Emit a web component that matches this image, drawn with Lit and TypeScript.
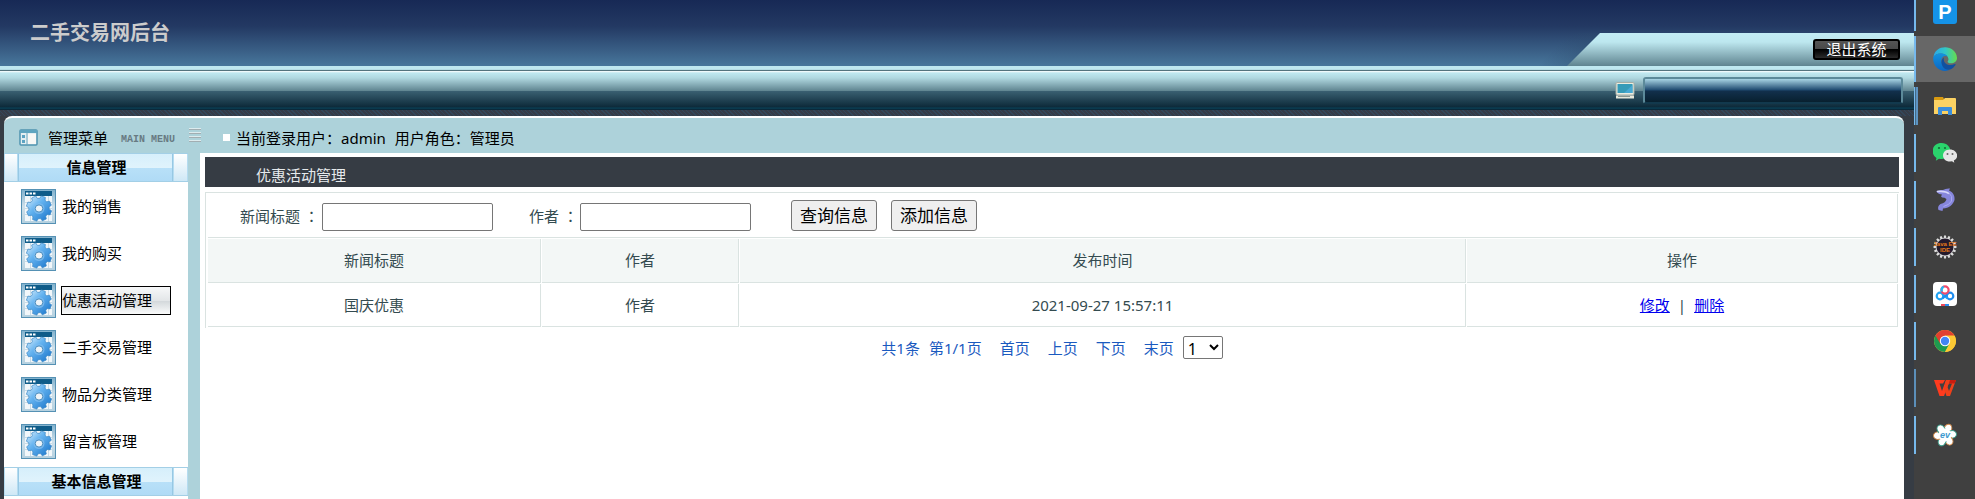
import { LitElement, html, css, svg } from "lit";
import { customElement, property } from "lit/decorators.js";
import { classMap } from "lit/directives/class-map.js";

function gearPath(cx: number, cy: number, outer: number, inner: number, teeth: number, turn = 0): string {
  const step = (Math.PI * 2) / teeth;
  const at = (r: number, a: number) => `${(cx + r * Math.cos(a)).toFixed(2)} ${(cy + r * Math.sin(a)).toFixed(2)}`;
  const points: string[] = [];
  for (let i = 0; i < teeth; i++) {
    const a = turn + i * step;
    points.push(at(inner, a - step * 0.36), at(outer, a - step * 0.22), at(outer, a + step * 0.22), at(inner, a + step * 0.36));
  }
  return `M${points.join("L")}Z`;
}

const settingsIcon = html`
  <svg class="icon" width="35" height="35" viewBox="0 0 35 35" aria-hidden="true">
    <defs>
      <linearGradient id="frame" x1="0" y1="0" x2="0" y2="1">
        <stop offset="0" stop-color="#7fb0cc" /><stop offset=".5" stop-color="#cfe0ea" /><stop offset="1" stop-color="#b4d0df" />
      </linearGradient>
      <linearGradient id="gear" x1="0" y1="0" x2="1" y2="1">
        <stop offset="0" stop-color="#e0f1fc" /><stop offset=".4" stop-color="#66b4f0" /><stop offset="1" stop-color="#1470c8" />
      </linearGradient>
    </defs>
    <rect x=".5" y=".5" width="34" height="34" fill="url(#frame)" stroke="#5591b4" />
    <rect x="4" y="7" width="27" height="25" fill="#f2f7fa" />
    <path d="M4 13.5H31M4 19.5H31M4 25.5H31M9.500 7V32M15.500 7V32M21.500 7V32M27.500 7V32" stroke="#c9dbe6" />
    <rect x="4" y="2" width="27" height="5" fill="#0f5c89" />
    <path d="M5 3.500h2.500v2H5zM8.500 3.500h2.500v2h-2.500zM12 3.500h2.500v2h-2.500z" fill="#fff" />
    <path d=${gearPath(18, 19.5, 12.8, 10.2, 8, 0.35)} fill="url(#gear)" stroke="#3a86c4" stroke-width=".7" stroke-linejoin="round" />
    <circle cx="18" cy="19.500" r="5.500" fill="#7dbcf0" opacity=".8" />
    <ellipse cx="18" cy="19.500" rx="3.800" ry="3.600" fill="#eef4f8" stroke="#4b8dbd" />
  </svg>
`;

@customElement("side-menu")
export class SideMenu extends LitElement {
  @property() current = "";
  private groups = [
    { title: "信息管理", items: ["我的销售", "我的购买", "优惠活动管理", "二手交易管理", "物品分类管理", "留言板管理"] },
    { title: "基本信息管理", items: [] as string[] },
  ];
  static styles = css`
    :host { display: block; background: #fff; color: #000; font-size: 15px; }
    .group { display: grid; grid-template-columns: 14px 1fr 15px; height: 29px; margin: 0; font-size: 15px; font-weight: 700; line-height: 26px; text-align: center; box-sizing: border-box; border: solid #a3cfe6; border-width: 1px 0; }
    .tab { border: solid #b5dcf0; border-width: 0 1px; background: linear-gradient(#fff, #cfe8f6); }
    .name { padding-left: 2px; border: solid #97c8e4; border-width: 0 1px; background: linear-gradient(#d6effb, #e0f3fc 14px, #b8e0f8 14px, #b0dbf6); }
    ul { list-style: none; margin: 0; padding: 1px 0 2px 17px; }
    li { display: flex; align-items: center; gap: 5px; height: 47px; }
    .icon { display: block; flex: none; }
    a { box-sizing: border-box; width: 110px; height: 29px; border: 1px solid transparent; line-height: 27px; color: #000; text-decoration: none; white-space: nowrap; }
    a.on { border-color: #000; background: linear-gradient(#f7f8f9, #e3e6e8 50%, #d3d8db 52%, #fafbfb); }
  `;
  render() {
    return html`<nav>${this.groups.map((g) => html`
      <h2 class="group"><span class="tab"></span><span class="name">${g.title}</span><span class="tab"></span></h2>
      ${g.items.length ? html`<ul>${g.items.map((t) => html`
        <li>${settingsIcon}<a href="#" class=${classMap({ on: t === this.current })}>${t}</a></li>`)}</ul>` : ""}
    `)}</nav>`;
  }
}

interface TaskApp { name: string; state?: string; art: unknown; }

const petal = (a: number) => svg`<ellipse cx="12" cy="5.500" rx="3.800" ry="5" fill="#fff" stroke=${a % 120 ? "#3aa08c" : "#d08a4a"} stroke-width="1" transform=${`rotate(${a + 25} 12 12)`} />`;

@customElement("task-bar")
export class TaskBar extends LitElement {
  private apps: TaskApp[] = [
    { name: "P", state: "first", art: svg`<rect y="-3" width="24" height="27" rx="3" fill="#1593e8"/><text x="12" y="19" font-size="20" font-weight="700" text-anchor="middle" fill="#fff" font-family="Liberation Sans, sans-serif">P</text>` },
    { name: "Edge", state: "active", art: svg`
      <defs><linearGradient id="e1" x1="0" x2="1"><stop offset="0" stop-color="#2aa8e8"/><stop offset=".5" stop-color="#32c6c8"/><stop offset="1" stop-color="#66dd4c"/></linearGradient>
      <linearGradient id="e2" x1="0" y1="0" x2="0" y2="1"><stop offset="0" stop-color="#1494df"/><stop offset="1" stop-color="#0a66c4"/></linearGradient></defs>
      <path d="M.5 10C2-3 23-3 24 11c0 5-6 6.500-9 4.500-1-1 .5-1.500.5-3.500C15 6 4 4 .5 10z" fill="url(#e1)"/>
      <path d="M.3 10C4 4 13 6 14.500 9.500 11 7.500 7.500 11 8.500 15c1.200 5 5 8 9 7.600C9 27-1 20 .3 10z" fill="url(#e2)"/>
      <path d="M11 10.500c-1.500 6 5 9.500 11 6.500 1 0 .5 1-.2 1.700C18 25 9.500 23.500 8.500 16c-.2-3 1-4.800 2.500-5.500z" fill="#1150a0"/>` },
    { name: "文件资源管理器", state: "stacked", art: svg`<path d="M1 4q0-1 1-1h8l1 2v3H1z" fill="#d99a10"/><path d="M1 6h9l2-2h10q1 0 1 1v15H1z" fill="#fbd263"/><path d="M5 21v-7q0-1 1-1h12q1 0 1 1v7h-4v-4H9v4z" fill="#3b8edb"/>` },
    { name: "微信", art: svg`<path d="M8.500 2C-2 2-2.500 14 3.500 17l-.7 2.700L6 17.800C22 20 20 2 8.500 2z" fill="#2ad36c"/><circle cx="6" cy="7" r="1.100" fill="#146c38"/><circle cx="12" cy="7" r="1.100" fill="#146c38"/><path d="M17 8.500c-9.500 0-9 12 0 12l2-.2 2.300 1.400-.5-2.200C27 16.500 24 8.500 17 8.500z" fill="#e6e6e6"/><circle cx="14.500" cy="13" r="1" fill="#666"/><circle cx="19.500" cy="13" r="1" fill="#666"/>` },
    { name: "Navicat", art: svg`<path d="M3 3.500Q6 1.500 10 2q2.500-1.800 7-1.500L16 2.500c4 1.500 6 5 5.500 9.500C20 17 16 20 10 20.500L9.500 23l-4-1q-1.500-3.500 2-6C11 15.500 13 13.500 13.500 11L11 9.500q-2 .5-3-1L9 6.500Q5 6 3 3.500z" fill="#8686dc"/><path d="M4 3.500q9-.8 12 2.200" fill="none" stroke="#d7d7fa" stroke-width="1.600"/><path d="M16 5q4 3 2.500 8-2 4-8 5.500" fill="none" stroke="#aaaaf2"/>` },
    { name: "Java EE IDE", art: svg`<path d=${gearPath(12, 12, 11.5, 9, 16)} fill="#ddd"/><circle cx="12" cy="12" r="8.500" fill="#241b2c"/><text x="12" y="11" font-size="6" font-weight="700" text-anchor="middle" fill="#e87a1a" font-family="Liberation Sans, sans-serif">Java EE</text><text x="12" y="17" font-size="6" font-weight="700" text-anchor="middle" fill="#e87a1a" font-family="Liberation Sans, sans-serif">IDE</text>` },
    { name: "百度网盘", art: svg`<rect width="24" height="24" rx="4" fill="#fff"/><g fill="none" stroke-width="2.200"><circle cx="7" cy="14" r="3.300" stroke="#22a4f4"/><circle cx="17" cy="14" r="3.300" stroke="#1f8df0"/><path d="M9 11.500 14.500 16.500" stroke="#22a4f4"/><path d="M15 11.500 9.500 16.500" stroke="#1f8df0"/><circle cx="12" cy="8" r="3.600" stroke="#f04a6c"/><path d="M8.700 9.500q-.8-3.500 2-4.700" stroke="#22b8f4"/></g><path d="M8 22h4v2H8z" fill="#f04a5c"/><path d="M12 22h4v2h-4z" fill="#2a8df0"/>` },
    { name: "Chrome", art: svg`<circle cx="12" cy="12" r="11" fill="#fcc934"/><path d="M12 12 2.500 6.500A11 11 0 0 0 12 23l4.800-8.300z" fill="#1e9a50"/><path d="M2.500 6.500A11 11 0 0 1 21.500 6.500H12L7.300 14.700z" fill="#e0402f"/><path d="M12 7h9.700A11 11 0 0 1 12 23l4.500-8.500z" fill="#fcc934"/><circle cx="12" cy="12" r="5.200" fill="#fff"/><circle cx="12" cy="12" r="4.200" fill="#4285f4"/>` },
    { name: "WPS", state: "dim", art: svg`<path d="M1 4h11l-2 3.500H6.500L9 15l4-11h4l-6 16H6.500z" fill="#ff3b1e"/><path d="M13 4h4l-2.500 7 1.500 4 3-7.500h-3L17 4h6l-6 16h-3.500L11 13z" fill="#f0401a"/><path d="M17 4h6l-1.300 3.500H16z" fill="#c81c10"/>` },
    { name: "EV", art: svg`${[0, 60, 120, 180, 240, 300].map(petal)}<circle cx="12" cy="12" r="6.500" fill="#fff"/><text x="12" y="15" font-size="9" font-style="italic" font-weight="700" text-anchor="middle" fill="#3c9ad0" font-family="Liberation Sans, sans-serif">ev</text>` },
  ];
  static styles = css`
    :host { display: block; background: #404040; overflow: hidden; }
    .bar { display: flex; flex-direction: column; }
    button { display: flex; align-items: center; height: 47px; width: 100%; padding: 0; border: 0; background: none; }
    .mark { flex: none; width: 2px; height: 38px; background: #76b9ed; margin-right: 17px; }
    .first { height: 35px; align-items: flex-start; }
    .first .mark { height: 31px; }
    .active { background: linear-gradient(#404040 1px, #676767 1px); }
    .active .mark { height: 46px; align-self: flex-end; }
    .stacked .mark { width: 4px; margin-right: 15px; background: linear-gradient(90deg, #76b9ed 1px, #456a86 1px, #456a86 2px, #5d94c2 2px); }
    .dim .mark { background: #5b8fba; }
    svg { display: block; }
  `;
  render() {
    return html`<div class="bar">${this.apps.map((a) => html`
      <button class=${a.state ?? ""} aria-label=${a.name}><span class="mark"></span><svg width="24" height="24" viewBox="0 0 24 24">${a.art}</svg></button>`)}</div>`;
  }
}

@customElement("promo-list")
export class PromoList extends LitElement {
  private rows = [{ title: "国庆优惠", author: "作者", time: "2021-09-27 15:57:11" }];
  static styles = css`
    :host { display: block; background: #fff; padding: 4px 5px 0; color: #344b50; font-size: 15px; }
    h1 { margin: 0 0 5px; height: 30px; padding-left: 51px; background: #363c44; color: #e6eaec; font-size: 15px; font-weight: 400; line-height: 37px; }
    .grid { border: solid #dae3e1; border-width: 1px 0 0 1px; padding-left: 1px; }
    form { display: flex; align-items: center; box-sizing: border-box; height: 44px; margin: 1px 1px 0; padding-left: 32px; border: solid #dae3e1; border-width: 0 1px 1px 0; }
    label { display: flex; gap: 4px; width: 82px; white-space: nowrap; }
    .short { width: 51px; }
    .colon { font-family: "Noto Sans CJK TC", sans-serif; }
    input { box-sizing: border-box; width: 171px; height: 28px; margin: 2px 36px 0 0; padding: 1px 4px; border: 1px solid #767676; border-radius: 2px; background: #fff; font: inherit; }
    .actions { display: flex; gap: 14px; margin-left: 4px; }
    button { box-sizing: border-box; width: 86px; height: 31px; padding: 0; border: 1px solid #767676; border-radius: 3px; background: #efefef; color: #000; font-family: inherit; font-size: 17px; line-height: 28px; }
    table { width: 100%; table-layout: fixed; border-collapse: separate; border-spacing: 1px; }
    th, td { box-sizing: border-box; height: 44px; padding: 0; border: solid #dae3e1; border-width: 0 1px 1px 0; font-weight: 400; text-align: center; line-height: 22px; }
    th { padding-bottom: 2px; background: #f3f7f6; }
    td { height: 43px; }
    .c1 { width: 333px; } .c2 { width: 197px; } .c4 { width: 431px; }
    td a { color: #00e; }
    .bar { padding: 0 8px; }
    .pager { display: flex; justify-content: center; align-items: center; gap: 18px; padding-top: 8px; color: #1a5abf; line-height: 20px; }
    .pager a { color: inherit; text-decoration: none; }
    .near { display: flex; align-items: center; gap: 9px; }
    select { width: 40px; height: 23px; padding: 0; border: 1px solid #767676; border-radius: 2px; background: #fff; color: #000; font-family: inherit; font-size: 16px; }
  `;
  render() {
    return html`
      <h1>优惠活动管理</h1>
      <div class="grid">
        <form>
          <label for="title"><span>新闻标题</span><span class="colon" lang="zh-Hant">：</span></label><input id="title" type="text" />
          <label class="short" for="author"><span>作者</span><span class="colon" lang="zh-Hant">：</span></label><input id="author" type="text" />
          <div class="actions"><button type="button">查询信息</button><button type="button">添加信息</button></div>
        </form>
        <table>
          <thead><tr><th class="c1">新闻标题</th><th class="c2">作者</th><th>发布时间</th><th class="c4">操作</th></tr></thead>
          <tbody>${this.rows.map((r) => html`<tr><td>${r.title}</td><td>${r.author}</td><td>${r.time}</td>
            <td><a href="#">修改</a><span class="bar">|</span><a href="#">删除</a></td></tr>`)}</tbody>
        </table>
      </div>
      <div class="pager">
        <span class="near"><span>共1条</span><span>第1/1页</span></span>
        <a href="#">首页</a><a href="#">上页</a><a href="#">下页</a>
        <span class="near"><a href="#">末页</a><select aria-label="页码"><option>1</option></select></span>
      </div>`;
  }
}

@customElement("app-root")
export class AppRoot extends LitElement {
  static styles = css`
    :host { display: grid; grid-template-columns: minmax(0, 1fr) 61px; height: 100vh; overflow: hidden; background: #363c44; font-family: "Noto Sans", "Noto Sans CJK SC", sans-serif; font-size: 15px; }
    .site { display: flex; flex-direction: column; min-height: 0; }
    .top { display: flex; justify-content: space-between; height: 66px; background: linear-gradient(#172955, #233963 40%, #48779c); }
    .brand { margin: 0; padding-left: 30px; color: #ccc; font-size: 20px; line-height: 66px; }
    .corner { align-self: flex-end; width: 387px; height: 33px; background: linear-gradient(135deg, transparent 30px, #2c4a6c55 56px); }
    .flap { display: flex; justify-content: flex-end; align-items: flex-start; box-sizing: border-box; height: 33px; margin-left: 40px; padding: 6px 14px 0 0; background: linear-gradient(#c2edf5, #bde7ef 9px, #5f8490); clip-path: polygon(33px 0, 100% 0, 100% 100%, 0 100%); }
    .exit { width: 87px; height: 21px; padding: 0; border: 2px solid #000; border-radius: 3px; background: linear-gradient(#555, #484848 50%, #000 50%, #2c2c2c); color: #fff; font-family: inherit; font-size: 15px; line-height: 17px; }
    .band { display: flex; justify-content: flex-end; align-items: center; gap: 8px; box-sizing: border-box; height: 44px; padding: 5px 11px 0 0; background: linear-gradient(#bfe8f0 0 3px, #a8cfd8 4px, #54747e 4px, #54747e 5px, #fff 5px, #bfe8f0 7px, #b0d8e0 12px, #5f8490 25px, #3a6072 25px, #0d2a3a 41px, #0a4258 42px, #0a2030 44px); }
    .well { box-sizing: border-box; width: 260px; height: 27px; border: 2px solid #5c8a9a; border-bottom-color: #12394d; border-radius: 3px; background: linear-gradient(#a8d4e4, #1f4a70 11px, #12304c 12px, #08202f); }
    .weave { height: 6px; background: repeating-linear-gradient(45deg, #33475a 0 1px, #363c48 1px 3px); }
    .frame { flex: 1; display: flex; flex-direction: column; min-height: 0; margin: 0 10px 0 4px; }
    .status { display: flex; align-items: center; box-sizing: border-box; height: 37px; padding: 4px 0 0 15px; border-top: 2px solid #fff; border-radius: 8px 8px 0 0; background: #add2da; color: #000; }
    .menu-name { margin: 0 13px 0 10px; }
    .menu-en { width: 68px; color: #687a82; font-family: "Liberation Mono", monospace; font-size: 10px; font-weight: 700; line-height: 20px; padding-top: 4px; white-space: nowrap; }
    .grip { width: 12px; height: 15px; align-self: flex-start; margin-top: 6px; background: repeating-linear-gradient(#dcebee 0 1px, #a2aeb2 1px 2px, transparent 2px 4px); }
    .dot { width: 7px; height: 7px; margin: 0 6px 0 22px; background: #fff; }
    .user { margin-right: 9px; }
    .body { flex: 1; display: grid; grid-template-columns: 184px minmax(0, 1fr); column-gap: 12px; min-height: 0; background: #add2da; }
    svg { display: block; flex: none; }
  `;
  render() {
    return html`
      <div class="site">
        <header class="top">
          <h1 class="brand">二手交易网后台</h1>
          <div class="corner"><div class="flap"><button class="exit">退出系统</button></div></div>
        </header>
        <div class="band">
          <svg width="20" height="17" viewBox="0 0 20 17" aria-hidden="true"><rect x="1" y="0.500" width="18" height="12.500" rx="1" fill="#ebece0" stroke="#a5ada5"/><rect x="2.500" y="2" width="15" height="9" fill="#369bb8"/><path d="M9 11 17.500 3v8z" fill="#48a9d4"/><path d="M1 13.500h18v3H1z" fill="#e6e8dc"/><path d="M3 14.500h12" stroke="#889690"/></svg>
          <div class="well"></div>
        </div>
        <div class="weave"></div>
        <div class="frame">
          <div class="status">
            <svg width="19" height="17" viewBox="0 0 19 17" aria-hidden="true"><rect x="1" y="1" width="17" height="15" rx="1" fill="#e4eff2" stroke="#4f94b0" stroke-width="1.500"/><path d="M1 1h17v3H1z" fill="#5fa5c0"/><path d="M8 4v12" stroke="#6aa6bd"/><path d="M3 6h3v3H3zM3 11h3v3H3z" fill="#5da3c2"/><path d="M9 5h8v10H9z" fill="#f8f8f6"/></svg>
            <span class="menu-name">管理菜单</span><span class="menu-en">MAIN MENU</span>
            <span class="grip"></span><span class="dot"></span>
            <span class="user">当前登录用户：admin</span><span>用户角色：管理员</span>
          </div>
          <div class="body"><side-menu current="优惠活动管理"></side-menu><promo-list></promo-list></div>
        </div>
      </div>
      <task-bar></task-bar>`;
  }
}
